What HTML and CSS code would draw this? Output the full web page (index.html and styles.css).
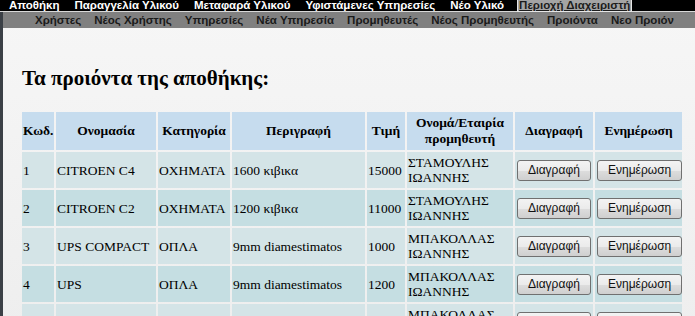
FILE: index.html
```html
<!DOCTYPE html>
<html lang="el">
<head>
<meta charset="utf-8">
<title>Προϊόντα</title>
<link rel="stylesheet" href="styles.css">
</head>
<body>
<nav class="topnav">
  <a href="#">Αποθήκη</a>
  <a href="#">Παραγγελία Υλικού</a>
  <a href="#">Μεταφαρά Υλικού</a>
  <a href="#">Υφιστάμενες Υπηρεσίες</a>
  <a href="#">Νέο Υλικό</a>
  <a href="#" class="active">Περιοχή Διαχειριστή</a>
</nav>
<div class="page">
  <nav class="subnav">
    <a href="#">Χρήστες</a>
    <a href="#">Νέος Χρήστης</a>
    <a href="#">Υπηρεσίες</a>
    <a href="#">Νέα Υπηρεσία</a>
    <a href="#">Προμηθευτές</a>
    <a href="#">Νέος Προμηθευτής</a>
    <a href="#">Προιόντα</a>
    <a href="#">Νεο Προιόν</a>
  </nav>
  <main class="content">
    <h1 class="title">Τα προιόντα της αποθήκης:</h1>
    <table class="products">
      <colgroup>
        <col class="c-id"><col class="c-name"><col class="c-cat"><col class="c-desc"><col class="c-price"><col class="c-sup"><col class="c-del"><col class="c-upd">
      </colgroup>
      <thead>
        <tr>
          <th class="left">Κωδ.</th>
          <th>Ονομασία</th>
          <th>Κατηγορία</th>
          <th>Περιγραφή</th>
          <th>Τιμή</th>
          <th>Ονομά/Εταιρία προμηθευτή</th>
          <th>Διαγραφή</th>
          <th>Ενημέρωση</th>
        </tr>
      </thead>
      <tbody>
        <tr>
          <td>1</td><td>CITROEN C4</td><td>ΟΧΗΜΑΤΑ</td><td>1600 κιβικα</td><td>15000</td><td>ΣΤΑΜΟΥΛΗΣ ΙΩΑΝΝΗΣ</td>
          <td><button class="btn">Διαγραφή</button></td><td><button class="btn">Ενημέρωση</button></td>
        </tr>
        <tr>
          <td>2</td><td>CITROEN C2</td><td>ΟΧΗΜΑΤΑ</td><td>1200 κιβικα</td><td>11000</td><td>ΣΤΑΜΟΥΛΗΣ ΙΩΑΝΝΗΣ</td>
          <td><button class="btn">Διαγραφή</button></td><td><button class="btn">Ενημέρωση</button></td>
        </tr>
        <tr>
          <td>3</td><td>UPS COMPACT</td><td>ΟΠΛΑ</td><td>9mm diamestimatos</td><td>1000</td><td>ΜΠΑΚΟΛΛΑΣ ΙΩΑΝΝΗΣ</td>
          <td><button class="btn">Διαγραφή</button></td><td><button class="btn">Ενημέρωση</button></td>
        </tr>
        <tr>
          <td>4</td><td>UPS</td><td>ΟΠΛΑ</td><td>9mm diamestimatos</td><td>1200</td><td>ΜΠΑΚΟΛΛΑΣ ΙΩΑΝΝΗΣ</td>
          <td><button class="btn">Διαγραφή</button></td><td><button class="btn">Ενημέρωση</button></td>
        </tr>
        <tr>
          <td>5</td><td>GLOCK 17</td><td>ΟΠΛΑ</td><td>9mm diamestimatos</td><td>800</td><td>ΜΠΑΚΟΛΛΑΣ ΙΩΑΝΝΗΣ</td>
          <td><button class="btn">Διαγραφή</button></td><td><button class="btn">Ενημέρωση</button></td>
        </tr>
      </tbody>
    </table>
  </main>
</div>
</body>
</html>
```
FILE: styles.css
```css
html, body {
  margin: 0;
  padding: 0;
}
body {
  background: #3b4046;
  font-family: "Liberation Serif", "Times New Roman", serif;
  color: #000;
  overflow: hidden;
}
.topnav {
  display: flex;
  align-items: center;
  gap: 15px;
  height: 11px;
  padding: 0 0 0 9px;
  background: #000;
  border-bottom: 1px solid #d8d8d8;
  white-space: nowrap;
}
.topnav a {
  font-family: "Liberation Sans", Arial, sans-serif;
  font-weight: bold;
  font-size: 11.5px;
  line-height: 11px;
  color: #fff;
  text-decoration: none;
}
.topnav a.active {
  background: #a4a4a4;
  color: #1c1c1c;
  text-decoration: underline;
  outline: 1px solid #e6e6e6;
  padding: 0 1px;
  margin-left: -1px;
}
.page {
  margin-left: 3px;
  background: linear-gradient(to bottom, #f6f6f6 0%, #ececec 100%);
  min-height: 400px;
}
.subnav {
  display: flex;
  align-items: center;
  gap: 13px;
  height: 16px;
  padding-left: 32px;
  background: #808080;
  white-space: nowrap;
}
.subnav a {
  font-family: "Liberation Sans", Arial, sans-serif;
  font-weight: bold;
  font-size: 11.5px;
  color: #1a1a1a;
  text-decoration: none;
}
.content {
  padding: 37px 0 0 19px;
}
.title {
  margin: 0 0 19px 0;
  font-size: 21px;
  line-height: 26px;
  font-weight: bold;
}
.products {
  border-collapse: separate;
  border-spacing: 2px;
  table-layout: fixed;
  width: 664px;
  margin-left: -2px;
  font-size: 13.5px;
}
.c-id { width: 32px; }
.c-name { width: 100px; }
.c-cat { width: 72px; }
.c-desc { width: 133px; }
.c-price { width: 38px; }
.c-sup { width: 106px; }
.c-del { width: 78px; }
.c-upd { width: 87px; }
.products th {
  background: #c6dcee;
  font-weight: bold;
  font-size: 13.5px;
  line-height: 16px;
  height: 38px;
  padding: 0 1px;
  text-align: center;
}
.products th.left {
  text-align: left;
}
.products td {
  padding: 3px 1px;
  line-height: 15px;
  height: 30px;
  vertical-align: middle;
  text-align: left;
}
.products tbody tr:nth-child(odd) td {
  background: #d4e4e7;
}
.products tbody tr:nth-child(even) td {
  background: #c5dee2;
}
.btn {
  font-family: "Liberation Sans", Arial, sans-serif;
  font-size: 12px;
  color: #111;
  height: 21px;
  padding: 0 10px;
  margin-left: 1px;
  border: 1px solid #707070;
  border-radius: 3px;
  background: linear-gradient(to bottom, #f3f3f3 0%, #ebebeb 50%, #dddddd 51%, #cfcfcf 100%);
}
```
